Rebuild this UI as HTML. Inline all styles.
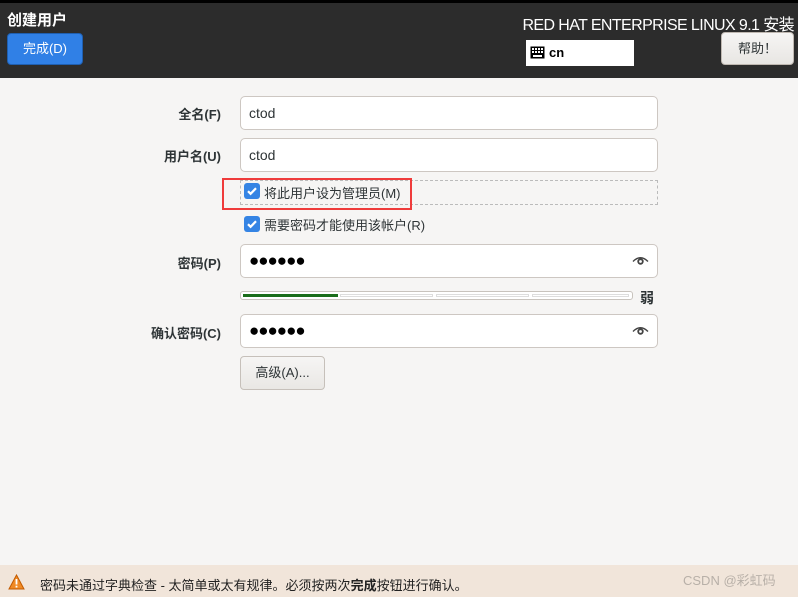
<!DOCTYPE html>
<html><head><meta charset="utf-8"><style>
*{margin:0;padding:0;box-sizing:border-box}
body{width:798px;height:597px;overflow:hidden;background:#f6f5f4;font-family:"Liberation Sans","Noto Sans CJK SC",sans-serif;position:relative;color:#2e3436}
.a{position:absolute}
.hdr{left:0;top:0;width:798px;height:78px;background:#2c2c2c;border-top:3px solid #000}
.lbl{right:577px;font-size:13px;font-weight:bold;color:#2e3436;text-align:right;white-space:nowrap}
.inp{left:240px;width:418px;height:34px;background:#fff;border:1px solid #cdc7c2;border-radius:5px;font-size:14px;padding:0 0 0 8px;line-height:32px;color:#2e3436}
.cb{width:16px;height:16px;background:#3584e4;border-radius:3px}
.dots{font-size:17px;letter-spacing:-1px;color:#000}
</style></head><body>
<div class="a hdr"></div>
<div class="a" style="left:7px;top:9px;color:#fff;font-size:15px;font-weight:bold">创建用户</div>
<div class="a" style="left:7px;top:33px;width:76px;height:32px;background:#3080e6;border:1px solid #1f5fb0;border-radius:4px;color:#fff;font-size:13px;text-align:center;line-height:30px">完成(D)</div>
<div class="a" style="right:4px;top:11px;color:#fff;font-size:16px;white-space:nowrap;letter-spacing:-0.6px">RED HAT ENTERPRISE LINUX 9.1 安装</div>
<div class="a" style="left:526px;top:40px;width:108px;height:26px;background:#fff"></div>
<svg class="a" style="left:530px;top:46px" width="15" height="13" viewBox="0 0 15 13"><rect x="0.5" y="0.5" width="14" height="12" fill="#000"/><g fill="#fff"><rect x="2" y="2" width="2" height="2"/><rect x="5" y="2" width="2" height="2"/><rect x="8" y="2" width="2" height="2"/><rect x="11" y="2" width="2" height="2"/><rect x="2" y="5" width="2" height="2"/><rect x="5" y="5" width="2" height="2"/><rect x="8" y="5" width="2" height="2"/><rect x="11" y="5" width="2" height="2"/><rect x="3" y="9" width="9" height="2"/></g></svg>
<div class="a" style="left:549px;top:45px;font-size:13px;font-weight:bold;color:#000">cn</div>
<div class="a" style="left:721px;top:32px;width:73px;height:33px;background:linear-gradient(#f6f5f4,#e8e6e3);border:1px solid #bfb8b1;border-radius:4px;font-size:13px;text-align:center;line-height:31px">帮助！</div>

<div class="a lbl" style="top:104px">全名(F)</div>
<div class="a inp" style="top:96px">ctod</div>
<div class="a lbl" style="top:146px">用户名(U)</div>
<div class="a inp" style="top:138px">ctod</div>

<div class="a" style="left:240px;top:180px;width:418px;height:25px;border:1px dashed #bbb"></div>
<div class="a" style="left:222px;top:178px;width:190px;height:32px;border:2px solid #ef3b3b"></div>
<svg class="a cb" style="left:244px;top:183px" viewBox="0 0 16 16"><path d="M4 8.2l2.6 2.6L12 5.2" stroke="#fff" stroke-width="2.2" fill="none"/></svg>
<div class="a" style="left:264px;top:183px;font-size:13px">将此用户设为管理员(M)</div>
<svg class="a cb" style="left:244px;top:216px" viewBox="0 0 16 16"><path d="M4 8.2l2.6 2.6L12 5.2" stroke="#fff" stroke-width="2.2" fill="none"/></svg>
<div class="a" style="left:264px;top:215px;font-size:13px">需要密码才能使用该帐户(R)</div>

<div class="a lbl" style="top:253px">密码(P)</div>
<div class="a inp dots" style="top:244px">●●●●●●</div>
<svg class="a" style="left:632px;top:255px" width="17" height="12" viewBox="0 0 17 12"><path d="M1 6.5Q8.5 -1 16 6.5" stroke="#444" stroke-width="1.4" fill="none"/><circle cx="8.5" cy="6.5" r="3.2" fill="#444"/><circle cx="8.5" cy="6.5" r="1.4" fill="#fff"/></svg>
<div class="a" style="left:240px;top:291px;width:393px;height:9px;border:1px solid #c8c3bd;border-radius:3px;background:#fff"></div>
<div class="a" style="left:243px;top:294px;width:95px;height:3px;background:#1a6d1a"></div>
<div class="a" style="left:340px;top:294px;width:93px;height:3px;border:1px solid #ddd"></div>
<div class="a" style="left:436px;top:294px;width:93px;height:3px;border:1px solid #ddd"></div>
<div class="a" style="left:532px;top:294px;width:97px;height:3px;border:1px solid #ddd"></div>
<div class="a" style="left:640px;top:288px;font-size:14px;font-weight:bold">弱</div>

<div class="a lbl" style="top:323px">确认密码(C)</div>
<div class="a inp dots" style="top:314px">●●●●●●</div>
<svg class="a" style="left:632px;top:325px" width="17" height="12" viewBox="0 0 17 12"><path d="M1 6.5Q8.5 -1 16 6.5" stroke="#444" stroke-width="1.4" fill="none"/><circle cx="8.5" cy="6.5" r="3.2" fill="#444"/><circle cx="8.5" cy="6.5" r="1.4" fill="#fff"/></svg>
<div class="a" style="left:240px;top:356px;width:85px;height:34px;background:linear-gradient(#f6f5f4,#e9e7e4);border:1px solid #c6c0ba;border-radius:4px;font-size:13px;text-align:center;line-height:32px">高级(A)...</div>

<div class="a" style="left:0;top:565px;width:798px;height:32px;background:#f1e5da"></div>
<svg class="a" style="left:8px;top:574px" width="17" height="16" viewBox="0 0 17 16"><path d="M8.5 1L16 15H1Z" fill="#f08a24" stroke="#c25a00" stroke-width="1"/><rect x="7.6" y="5" width="1.8" height="5.5" fill="#fff"/><rect x="7.6" y="11.7" width="1.8" height="1.8" fill="#fff"/></svg>
<div class="a" style="left:40px;top:575px;font-size:13px;color:#222;white-space:nowrap">密码未通过字典检查 - 太简单或太有规律。必须按两次<b>完成</b>按钮进行确认。</div>
<div class="a" style="left:683px;top:570px;font-size:13px;color:#b8b0a8;white-space:nowrap">CSDN @彩虹码</div>
</body></html>
